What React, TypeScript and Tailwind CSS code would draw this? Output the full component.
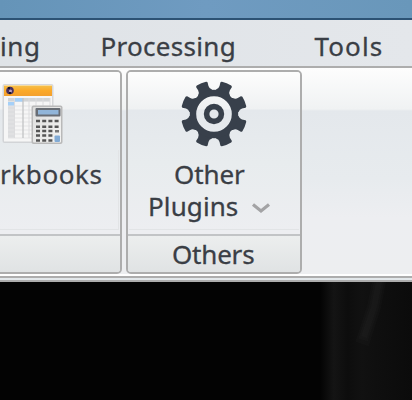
import React from "react";

const teeth = [22.5, 67.5, 112.5, 157.5, 202.5, 247.5, 292.5, 337.5];

function Gear() {
  return (
    <svg width="66" height="66" viewBox="-33 -33 66 66" className="block shrink-0">
      <g fill="#38404b">
        {teeth.map((a) => (
          <path
            key={a}
            transform={`rotate(${a})`}
            d="M-9 -20 L-7.5 -23.5 Q-5.2 -25.5 -5.6 -28 L-6.2 -31.6 Q-6 -32.6 -5 -32.8 Q0 -33.6 5 -32.8 Q6 -32.6 6.2 -31.6 L5.6 -28 Q5.2 -25.5 7.5 -23.5 L9 -20 Z"
          />
        ))}
      </g>
      <circle r="21" fill="none" stroke="#38404b" strokeWidth="6.4" />
      <circle r="7.4" fill="none" stroke="#38404b" strokeWidth="5.6" />
    </svg>
  );
}

function Workbook() {
  return (
    <svg width="64" height="64" viewBox="0 0 64 64" className="block shrink-0">
      <rect x="2.5" y="4" width="51" height="59" rx="2" fill="#c9cbcd" opacity=".7" />
      <rect x="4" y="5" width="48" height="56.5" fill="#f6f6f6" />
      <defs>
        <linearGradient id="orange" x2="0" y2="1">
          <stop stopColor="#f5c04a" />
          <stop offset=".5" stopColor="#fba929" />
          <stop offset="1" stopColor="#f3a02e" />
        </linearGradient>
        <linearGradient id="calc" x2="1" y2="1">
          <stop stopColor="#dddddc" />
          <stop offset="1" stopColor="#f4f4f3" />
        </linearGradient>
      </defs>
      <rect x="4" y="5.5" width="48" height="10.5" fill="url(#orange)" />
      <circle cx="10" cy="10.5" r="3.8" fill="#49305d" />
      <circle cx="10.5" cy="11" r="1.5" fill="#b6a0c5" />
      <path d="M8 8h2M9 13h2" stroke="#151329" strokeWidth="2" />
      <rect x="8" y="18" width="42" height="3.6" fill="#d2d4d6" />
      <rect x="14" y="18" width="9" height="3.6" fill="#a5d0f8" />
      <rect x="8" y="22" width="6" height="4" fill="#a5d0f8" />
      <rect x="8" y="26" width="6" height="32" fill="#dcdddf" />
      <path d="M8 26h42M8 30h42M8 34h42M8 38h42M8 42h42M8 46h42M8 50h42M8 54h42M8 58h42" stroke="#e4e4e5" />
      <path d="M14.5 18v40M29 18v40M36 18v40M43 18v40M50 18v40" stroke="#dcdcde" />
      <path d="M23 18v40" stroke="#c2c3c5" strokeWidth="1.3" />
      <rect x="31.5" y="25.5" width="31" height="38.5" rx="2" fill="#b9b9b9" />
      <rect x="33" y="27" width="28" height="35.5" rx="1" fill="url(#calc)" />
      <rect x="35.5" y="28" width="25" height="8.5" rx="1" fill="#686d74" />
      <rect x="38" y="30" width="20.5" height="4.5" fill="#91b5d9" />
      <path d="M36 41h24.5M36 46.8h24.5M36 51h18.5M36 55.5h18.5M36 60.5h18.5" stroke="#555" strokeWidth="2.6" strokeDasharray="4 2.2" />
      <rect x="55" y="50" width="4" height="2.5" fill="#777" />
      <rect x="54.5" y="55.5" width="5.5" height="6.5" rx="1" fill="#82abd5" />
    </svg>
  );
}

const body =
  "bg-[linear-gradient(to_bottom,#fdfdfd_0px,#eff1f2_37px,#e4e8ec_38px,#e8ecee_90px,#edeef1_160px)]";

export default function App() {
  return (
    <div className="flex h-[400px] w-[412px] flex-col overflow-hidden bg-[#030303] font-['Noto_Sans','Open_Sans',sans-serif] text-[26px] text-[#3a3e45] [-webkit-text-stroke:0.3px_#3a3e45]">
      <div className="h-5 shrink-0 border-b-2 border-[#2c5274] bg-[linear-gradient(to_right,#6594b8,#6f9bc1_50%,#6997ba)]" />
      <nav className="flex h-12 shrink-0 border-b-2 border-[#adadad] bg-[linear-gradient(to_right,#dfe3e7,#e4e7eb)] leading-[52px] whitespace-nowrap">
        <div className="flex w-[100.5px] shrink-0">
          <span className="tracking-[0.6px]">ing</span>
        </div>
        <span className="w-[214px] shrink-0 tracking-[0.3px]">Processing</span>
        <span className="tracking-[1.1px]">Tools</span>
      </nav>
      <div className="h-52 shrink-0 bg-[linear-gradient(to_bottom,#fdfdfd_0px,#f0f2f3_41px,#e4e8ec_43px,#e7ebee_110px,#edeef1_150px,#edeef0_206px,#fff_206px)] pt-0.5">
        <div className="flex h-[204px] gap-1">
          <section className="flex w-[122px] shrink-0 flex-col overflow-hidden rounded-r-[5px] border-2 border-l-0 border-[#adadad]">
            <div className={`flex h-[162px] flex-col pt-2 ${body}`}>
              <div className="h-[70px]">
                <Workbook />
              </div>
              <div className="h-20 w-[119px] border-r border-b border-[#e2e4e6] leading-[48px] tracking-[0.6px]">
                rkbooks
              </div>
            </div>
            <div className="grow border-t-2 border-[#c2c4c6] bg-[linear-gradient(to_bottom,#eceeee,#e0e3e4)]" />
          </section>
          <section className="flex w-[176px] shrink-0 flex-col overflow-hidden rounded-[5px] border-2 border-[#adadad]">
            <div className={`flex h-[162px] flex-col pt-[9px] ${body}`}>
              <div className="flex h-[77px] justify-center">
                <Gear />
              </div>
              <div className="mx-px flex h-[72px] flex-col border-b border-[#e2e4e6] leading-8 whitespace-nowrap">
                <span className="pl-[45px] tracking-[-0.1px]">Other</span>
                <div className="flex items-center pl-[19px]">
                  <span className="w-[103px] tracking-[0.1px]">Plugins</span>
                  <svg width="20" height="12" viewBox="0 0 20 12" className="mt-[3px]">
                    <path d="M2 2.5L10 9L18 2.5" fill="none" stroke="#a3a3a5" strokeWidth="3.2" />
                  </svg>
                </div>
              </div>
            </div>
            <div className="grow border-t-2 border-[#c2c4c6] bg-[linear-gradient(to_bottom,#eceeee,#e0e3e4)] pl-11 leading-9 tracking-[-0.2px]">
              Others
            </div>
          </section>
        </div>
      </div>
      <div className="h-1.5 shrink-0 border-y-2 border-[#adadad] bg-[#e3e8eb]" />
      <div className="flex grow justify-end bg-[#030303]">
        <svg width="92" height="118" viewBox="0 0 92 118">
          <defs>
            <linearGradient id="shade">
              <stop stopColor="#030303" />
              <stop offset=".07" stopColor="#0b0b0b" />
              <stop offset=".15" stopColor="#141414" />
              <stop offset=".3" stopColor="#0d0d0d" />
              <stop offset=".45" stopColor="#111" />
              <stop offset=".6" stopColor="#0f0f0f" />
              <stop offset="1" stopColor="#0b0b0b" />
            </linearGradient>
          </defs>
          <rect width="92" height="118" fill="url(#shade)" />
          <g fill="none" stroke="#fff" strokeOpacity=".014">
            <path d="M60 -5L54 25L42 62" strokeWidth="14" />
            <path d="M60 -5L54 25L43 58" strokeWidth="10" />
            <path d="M60 -5L54 25L44 55" strokeWidth="6" />
          </g>
        </svg>
      </div>
    </div>
  );
}
